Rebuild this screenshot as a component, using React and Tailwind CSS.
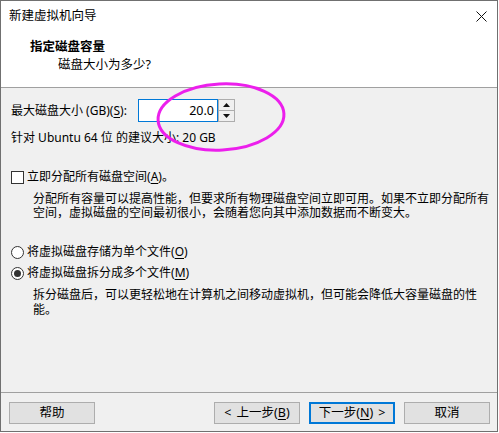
import React from 'react';

const font = { fontFamily: '"Noto Sans", "Noto Sans CJK SC", sans-serif' };

const Mn = ({ k }) => (
    <span>(<span className="underline underline-offset-2">{k}</span>)</span>
);

const Button = ({ children, primary }) => (
    <button
        className={`w-[86px] h-[22px] flex items-center justify-center bg-[#e1e1e1] text-[12.5px] text-black ${primary ? 'border-2 border-[#0078d7]' : 'border border-[#adadad]'}`}
    >
        {children}
    </button>
);

const Radio = ({ checked }) => (
    <span className="w-[13px] h-[13px] rounded-full border border-[#333] bg-white flex items-center justify-center shrink-0">
        {checked && <span className="w-[7px] h-[7px] rounded-full bg-[#333]" />}
    </span>
);

const App = () => {
    return (
        <div className="relative w-[499px] h-[433px] bg-white text-black text-[12px] leading-[14px]" style={font}>
            <div className="w-[498px] h-[432px] border border-[#707070] flex flex-col">
                {/* title bar */}
                <div className="h-[30px] shrink-0 bg-white flex items-center justify-between pl-[8px] pr-[10px]">
                    <span className="text-[12.5px]">新建虚拟机向导</span>
                    <svg width="11" height="11" viewBox="0 0 11 11">
                        <path d="M0.5 0.5 L10.5 10.5 M10.5 0.5 L0.5 10.5" stroke="#111" strokeWidth="1" />
                    </svg>
                </div>

                {/* header */}
                <div className="h-[57px] shrink-0 bg-white pl-[29px] pt-[9px] border-b border-[#a0a0a0]">
                    <div className="font-bold text-[12.5px] leading-[14px]">指定磁盘容量</div>
                    <div className="pl-[28px] mt-[4px] text-[12.5px]">磁盘大小为多少?</div>
                </div>

                {/* body */}
                <div className="flex-1 bg-[#f0f0f0] pl-[10px] pt-[11px] flex flex-col">
                    <div className="flex items-center h-[23px]">
                        <span className="w-[127px]">最大磁盘大小 (GB)<Mn k="S" />:</span>
                        <div className="w-[80px] h-[23px] bg-white border border-[#0078d7] flex items-center justify-end pr-[3px] text-[12.5px]">
                            20.0
                        </div>
                        <div className="w-[17px] h-[23px] border border-[#adadad] flex flex-col bg-[#f0f0f0]">
                            <div className="flex-1 flex items-center justify-center border-b border-[#adadad]">
                                <svg width="7" height="4" viewBox="0 0 7 4"><path d="M3.5 0 L7 4 L0 4 Z" fill="#111" /></svg>
                            </div>
                            <div className="flex-1 flex items-center justify-center">
                                <svg width="7" height="4" viewBox="0 0 7 4"><path d="M0 0 L7 0 L3.5 4 Z" fill="#111" /></svg>
                            </div>
                        </div>
                    </div>
                    <div className="mt-[9px]">针对 Ubuntu 64 位 的建议大小: 20 GB</div>

                    <div className="mt-[25px] flex items-center gap-[3px]">
                        <span className="w-[13px] h-[13px] border border-[#333] bg-white shrink-0" />
                        <span>立即分配所有磁盘空间<Mn k="A" />。</span>
                    </div>
                    <div className="mt-[8px] pl-[22px]">
                        分配所有容量可以提高性能，但要求所有物理磁盘空间立即可用。如果不立即分配所有<br />
                        空间，虚拟磁盘的空间最初很小，会随着您向其中添加数据而不断变大。
                    </div>

                    <div className="mt-[25px] flex items-center gap-[3px]">
                        <Radio />
                        <span>将虚拟磁盘存储为单个文件<Mn k="O" /></span>
                    </div>
                    <div className="mt-[7px] flex items-center gap-[3px]">
                        <Radio checked />
                        <span>将虚拟磁盘拆分成多个文件<Mn k="M" /></span>
                    </div>
                    <div className="mt-[7px] pl-[22px] leading-[15px]">
                        拆分磁盘后，可以更轻松地在计算机之间移动虚拟机，但可能会降低大容量磁盘的性<br />
                        能。
                    </div>
                </div>

                {/* footer */}
                <div className="h-[39px] shrink-0 bg-[#f0f0f0] border-t border-[#a0a0a0] flex items-start pt-[9px] pl-[8px] pr-[7px] gap-[9px]">
                    <Button>帮助</Button>
                    <div className="flex-1" />
                    <Button><span className="mr-[5px]">&lt;</span>上一步<Mn k="B" /></Button>
                    <Button primary>下一步<Mn k="N" /><span className="ml-[5px]">&gt;</span></Button>
                    <Button>取消</Button>
                </div>
            </div>

            <svg className="absolute left-0 top-0 pointer-events-none" width="499" height="433">
                <ellipse cx="221" cy="117" rx="63" ry="33" fill="none" stroke="#ec1fec" strokeWidth="3" transform="rotate(-3 221 117)" />
            </svg>
        </div>
    );
};

export default App;
